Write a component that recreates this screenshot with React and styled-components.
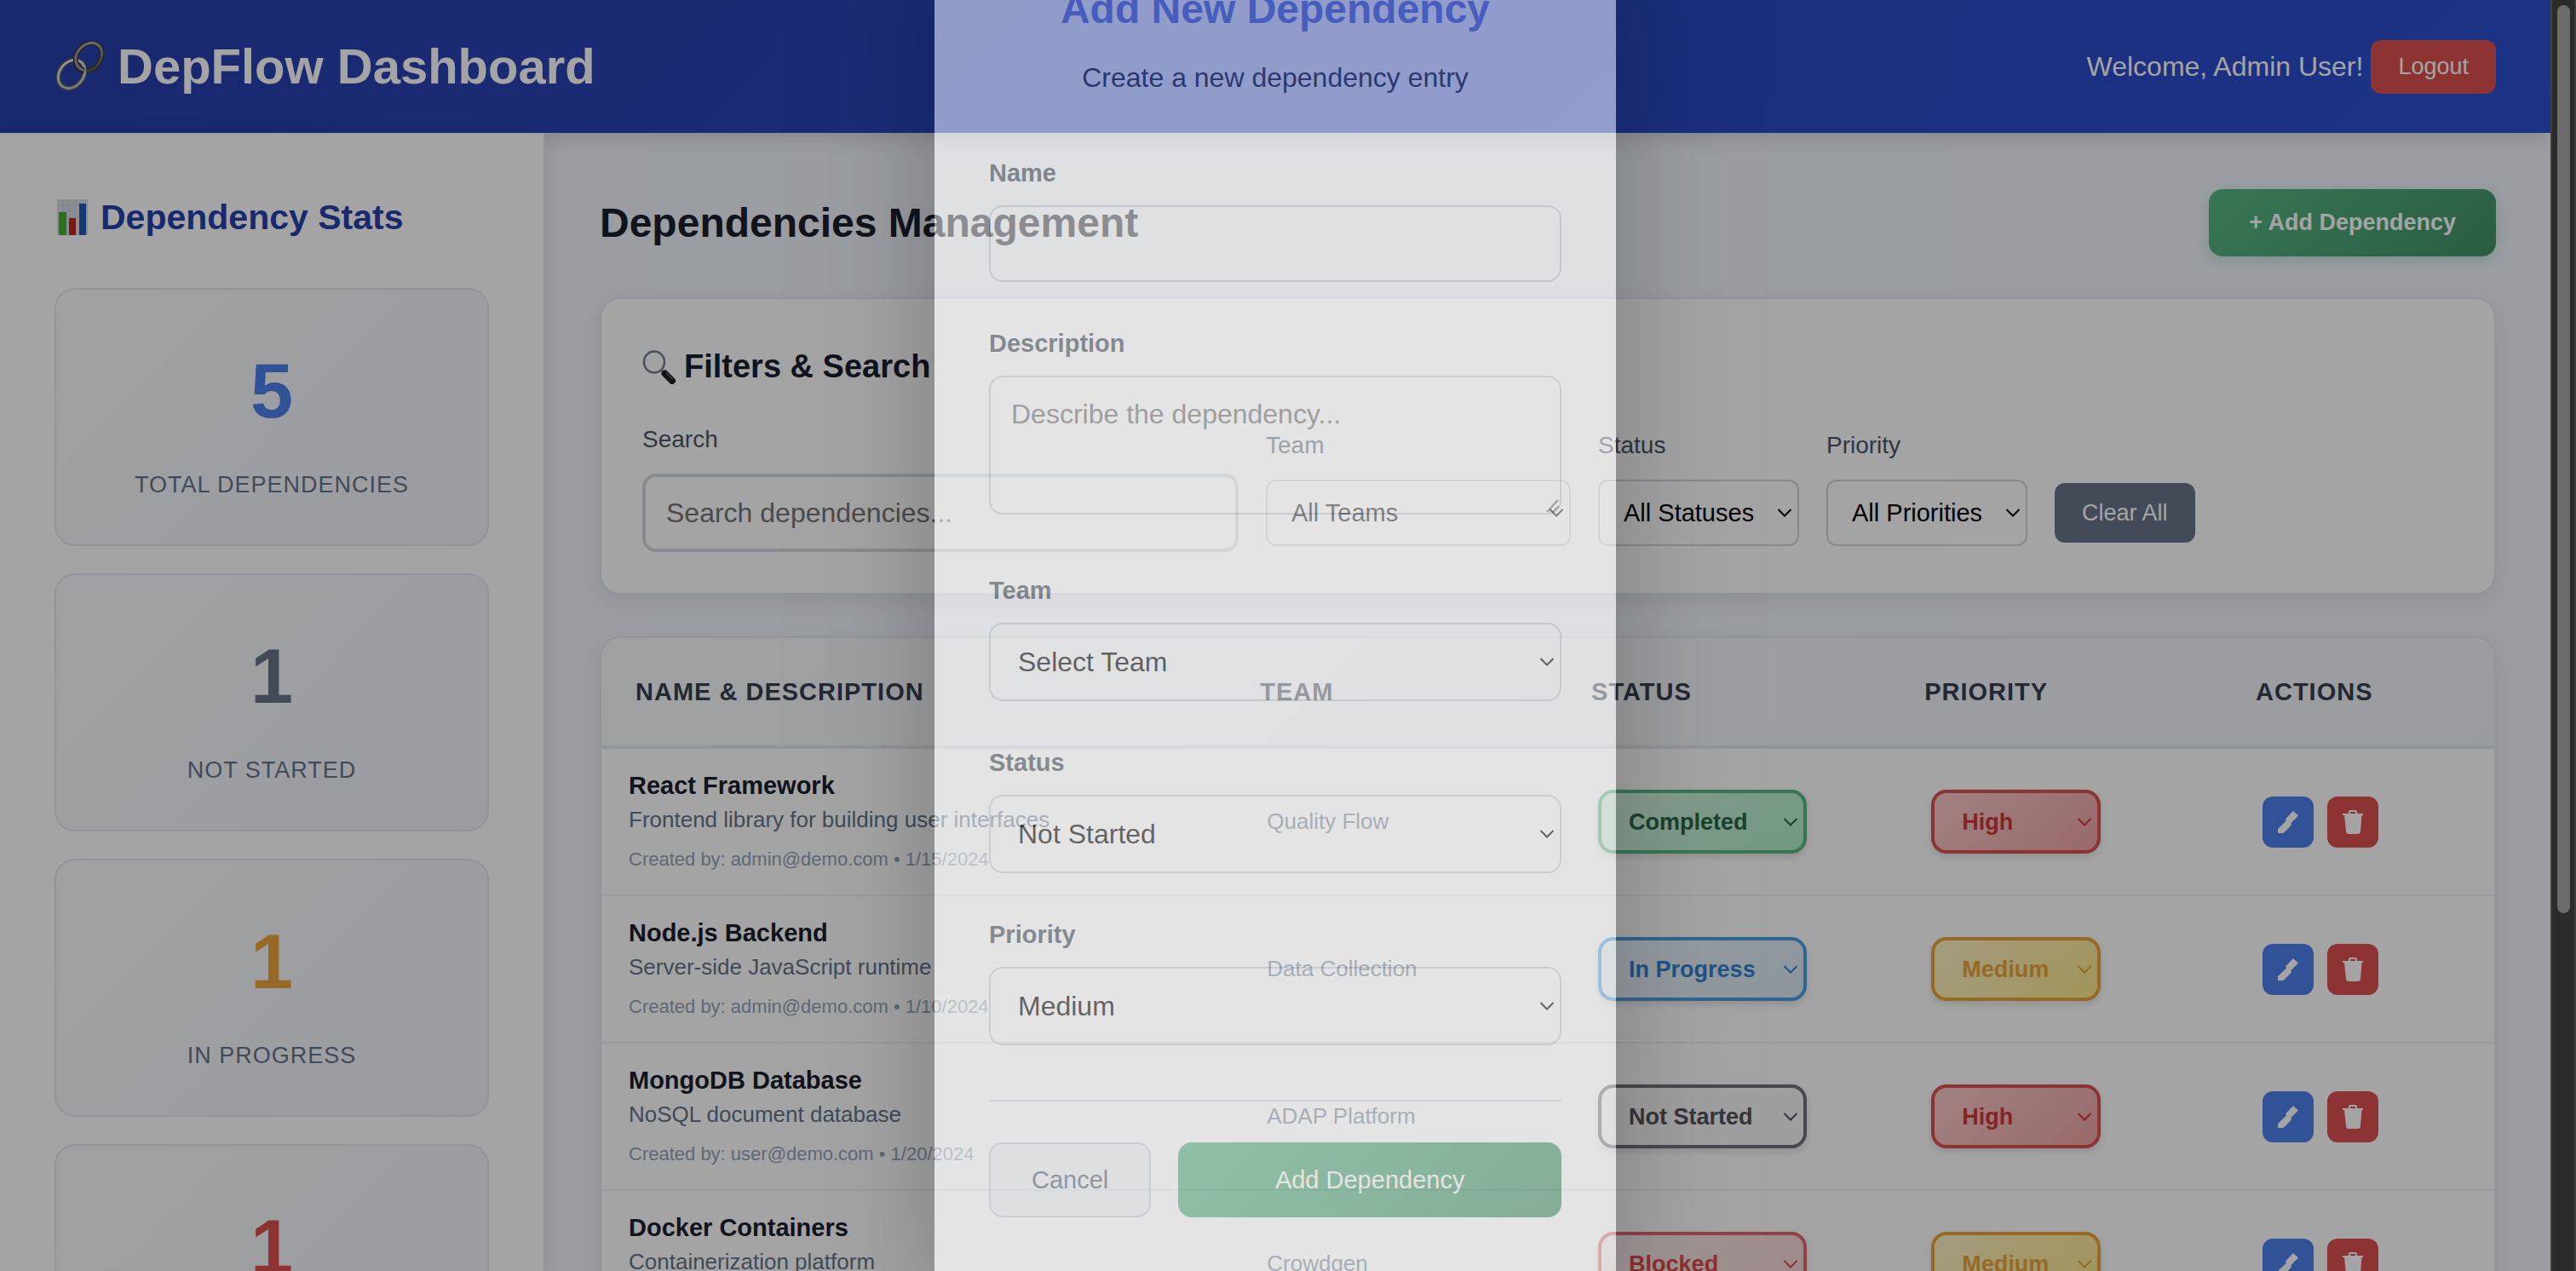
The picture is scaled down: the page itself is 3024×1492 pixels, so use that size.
import React from "react";
import styled, { createGlobalStyle } from "styled-components";

const GlobalStyle = createGlobalStyle`
  *, *::before, *::after { box-sizing: border-box; }
  body {
    margin: 0;
    background: #f1f4fb;
    color: #1a202c;
    font-family: "Liberation Sans", Arial, sans-serif;
    font-size: 32px;
  }
  button, input, select, textarea { font-family: inherit; margin: 0; }
  h1, h2, h3, p { margin: 0; }
`;

const Screen = styled.div`
  display: flex;
  height: 100vh;
  overflow: hidden;
`;

const Page = styled.div`
  position: relative;
  flex: 1;
  min-width: 0;
  display: flex;
  flex-direction: column;
  overflow: hidden;
`;

const ScrollTrack = styled.div`
  flex: none;
  width: 30px;
  padding: 6px 5px 6px 6px;
  background: #2b2b2b;
  border-left: 2px solid #3d3d3d;
  border-right: 2px solid #3d3d3d;
`;

const ScrollThumb = styled.div`
  height: 72%;
  border-radius: 8px;
  background: #6b6b6b;
`;

const Header = styled.header`
  flex: none;
  display: flex;
  align-items: center;
  justify-content: space-between;
  height: 156px;
  padding: 0 64px;
  background: linear-gradient(135deg, #2840ac 0%, #2c4fd0 100%);
  box-shadow: 0 4px 24px rgba(0, 0, 0, 0.15);
  color: #fff;
`;

const Brand = styled.h1`
  display: flex;
  align-items: center;
  gap: 14px;
  font-size: 58px;
  line-height: 68px;
`;

const Account = styled.div`
  display: flex;
  align-items: center;
  gap: 9px;
`;

const Welcome = styled.span`
  font-size: 32px;
  line-height: 36px;
`;

const Button = styled.button`
  border: 0;
  border-radius: 12px;
  padding: 0 32px;
  height: ${(p) => p.$height}px;
  background: ${(p) => p.$bg};
  color: #fff;
  font-size: 27px;
`;

const Columns = styled.div`
  flex: 1;
  min-height: 0;
  display: flex;
`;

const Sidebar = styled.aside`
  position: relative;
  flex: none;
  width: 640px;
  display: flex;
  flex-direction: column;
  gap: 32px;
  padding: 73px 64px 0;
  background: #fff;
  border-top: 2px solid #f1f4fb;
  border-right: 2px solid #e2e8f0;
  box-shadow: 4px 0 20px rgba(0, 0, 0, 0.08);
`;

const SidebarTitle = styled.h2`
  display: flex;
  align-items: center;
  gap: 12px;
  margin-bottom: 27px;
  color: #2840ac;
  font-size: 41px;
  line-height: 48px;
`;

const StatCard = styled.div`
  flex: none;
  display: flex;
  flex-direction: column;
  align-items: center;
  gap: 38px;
  height: 303px;
  padding-top: 67px;
  border: 2px solid #e2e8f0;
  border-radius: 24px;
  background: linear-gradient(135deg, #f8fafc 0%, #f1f3f8 100%);
`;

const StatValue = styled.span`
  color: ${(p) => p.$color};
  font-size: 90px;
  font-weight: 700;
  line-height: 104px;
`;

const StatLabel = styled.span`
  color: #64748b;
  font-size: 27px;
  line-height: 40px;
  letter-spacing: 1px;
  text-transform: uppercase;
`;

const Main = styled.main`
  flex: 1;
  min-width: 0;
  display: flex;
  flex-direction: column;
  padding: 66px 64px 0;
`;

const TitleBar = styled.div`
  display: flex;
  align-items: center;
  justify-content: space-between;
  margin-bottom: 48px;
`;

const PageTitle = styled.h2`
  font-size: 48px;
  line-height: 56px;
`;

const AddButton = styled.button`
  height: 79px;
  padding: 0 47px;
  border: 0;
  border-radius: 16px;
  background: linear-gradient(135deg, #56b985 0%, #429167 100%);
  box-shadow: 0 4px 16px rgba(72, 187, 120, 0.3);
  color: #fff;
  font-size: 27px;
  font-weight: 700;
`;

const Card = styled.section`
  flex: none;
  border: 2px solid #e2e8f0;
  border-radius: 24px;
  background: #fff;
  box-shadow: 0 8px 24px rgba(0, 0, 0, 0.08);
  overflow: hidden;
`;

const FilterCard = styled(Card)`
  padding: 57px 48px 48px;
  margin-bottom: 49px;
`;

const FilterTitle = styled.h3`
  display: flex;
  align-items: center;
  gap: 9px;
  margin-bottom: 48px;
  font-size: 38px;
  line-height: 44px;
`;

const FilterRow = styled.div`
  display: flex;
  align-items: center;
  gap: 32px;
`;

const FilterField = styled.div`
  flex: none;
  display: flex;
  flex-direction: column;
  gap: 24px;
  width: ${(p) => p.$width}px;
`;

const FilterLabel = styled.label`
  color: #4a5568;
  font-size: 28px;
  line-height: 32px;
`;

const SearchInput = styled.input`
  width: 100%;
  height: 92px;
  padding: 0 24px;
  border: 4px solid #d5d8de;
  border-radius: 16px;
  background: #fff;
  font-size: 32px;
  &::placeholder { color: #757575; opacity: 1; }
`;

const ButtonSlot = styled.div`
  align-self: flex-end;
  padding-bottom: 11px;
`;

const SelectWrap = styled.div`
  position: relative;
  color: ${(p) => p.$color || "#000"};
  width: ${(p) => (p.$width ? `${p.$width}px` : "100%")};
`;

const FilterSelectBox = styled.select`
  appearance: none;
  display: block;
  width: 100%;
  height: 78px;
  padding: 0 40px 0 28px;
  border: 2px solid #d3d5da;
  border-radius: 12px;
  background: #fff;
  color: inherit;
  font-size: 29px;
`;

const BadgeSelectBox = styled.select`
  appearance: none;
  display: block;
  width: 100%;
  height: 75px;
  padding: 0 32px;
  border: 4px solid ${(p) => p.$border};
  border-radius: 18px;
  background: ${(p) => p.$bg};
  box-shadow: 0 4px 8px rgba(0, 0, 0, 0.12);
  color: inherit;
  font-size: 27px;
  font-weight: 700;
`;

const ChevronIcon = styled.svg`
  position: absolute;
  top: 50%;
  right: ${(p) => p.$right}px;
  width: 18px;
  height: 12px;
  margin-top: -6px;
  fill: none;
  stroke: currentColor;
  stroke-width: 2;
  pointer-events: none;
`;

const Table = styled.table`
  width: 100%;
  table-layout: fixed;
  border-collapse: separate;
  border-spacing: 0;
`;

const Col = styled.col`
  width: ${(p) => p.$width};
`;

const HeadRow = styled.tr`
  background: linear-gradient(135deg, #f8fafc 0%, #f1f3f8 100%);
`;

const Th = styled.th`
  height: 130px;
  padding: 0 0 0 40px;
  border-bottom: 4px solid #e2e6f0;
  color: #374151;
  font-size: 29px;
  letter-spacing: 1px;
  text-align: left;
  text-transform: uppercase;
`;

const Td = styled.td`
  height: 173px;
  padding: 0 0 0 ${(p) => (p.$first ? 32 : 48)}px;
  border-bottom: 2px solid #edf0f5;
  color: #64748b;
  font-size: 26px;
  vertical-align: middle;
`;

const DepName = styled.p`
  color: #1a202c;
  font-size: 29px;
  font-weight: 700;
  line-height: 40px;
`;

const DepText = styled.p`
  color: #64748b;
  font-size: 26px;
  line-height: 40px;
  white-space: nowrap;
`;

const DepMeta = styled.p`
  margin-top: 8px;
  color: #94a3b8;
  font-size: 22px;
  line-height: 38px;
  white-space: nowrap;
`;

const Actions = styled.div`
  display: flex;
  gap: 16px;
`;

const IconButton = styled.button`
  display: flex;
  align-items: center;
  justify-content: center;
  width: 60px;
  height: 60px;
  padding: 0;
  border: 0;
  border-radius: 12px;
  background: ${(p) => p.$bg};
  color: #fff;
`;

const Overlay = styled.div`
  position: absolute;
  inset: 0;
  display: flex;
  align-items: flex-end;
  justify-content: center;
  background: rgba(0, 0, 0, 0.5);
  opacity: 0.71;
`;

const Modal = styled.form`
  flex: none;
  width: 800px;
  padding: 64px 64px 63px;
  background: #fff;
  box-shadow: 0 40px 120px rgba(0, 0, 0, 0.6);
  opacity: 0.71;
`;

const ModalHead = styled.div`
  display: flex;
  flex-direction: column;
  align-items: center;
  gap: 32px;
  margin-bottom: 76px;
`;

const ModalTitle = styled.h2`
  color: #6e84e6;
  font-size: 48px;
  line-height: 60px;
`;

const ModalText = styled.p`
  color: #363a4c;
  font-size: 32px;
  line-height: 36px;
`;

const Field = styled.div`
  display: flex;
  flex-direction: column;
  gap: 20px;
  margin-bottom: ${(p) => p.$space || 54}px;
`;

const FieldLabel = styled.label`
  color: #414b58;
  font-size: 29px;
  font-weight: 700;
  line-height: 36px;
`;

const TextInput = styled.input`
  width: 100%;
  height: 90px;
  padding: 0 24px;
  border: 2px solid #cbd0d8;
  border-radius: 16px;
  background: transparent;
  font-size: 32px;
`;

const TextAreaWrap = styled.div`
  position: relative;
`;

const TextArea = styled.textarea`
  display: block;
  width: 100%;
  height: 163px;
  padding: 24px;
  border: 2px solid #cbd0d8;
  border-radius: 16px;
  background: transparent;
  font-size: 32px;
  line-height: 38px;
  resize: none;
  &::placeholder { color: #757575; opacity: 1; }
`;

const Grip = styled.svg`
  position: absolute;
  right: 0;
  bottom: 0;
  width: 20px;
  height: 20px;
  fill: none;
  stroke: #777;
  stroke-width: 2;
`;

const FormSelect = styled.select`
  appearance: none;
  display: block;
  width: 100%;
  height: 92px;
  padding: 0 48px 0 32px;
  border: 2px solid #cbd0d8;
  border-radius: 16px;
  background: transparent;
  color: inherit;
  font-size: 32px;
`;

const ModalFoot = styled.div`
  display: flex;
  gap: 32px;
  padding-top: 48px;
  border-top: 2px solid #d8dce3;
`;

const CancelButton = styled.button`
  height: 88px;
  padding: 0 48px;
  border: 2px solid #cbd0d8;
  border-radius: 16px;
  background: #f1f4f9;
  color: #5a6478;
  font-size: 29px;
`;

const SubmitButton = styled.button`
  flex: 1;
  height: 88px;
  border: 0;
  border-radius: 16px;
  background: linear-gradient(135deg, #56b985 0%, #429167 100%);
  color: #fff;
  font-size: 29px;
`;

const Chevron = ({ right = 8 }) => (
  <ChevronIcon $right={right} viewBox="0 0 18 12" aria-hidden="true">
    <path d="M1.5 2 L9 9.5 L16.5 2" />
  </ChevronIcon>
);

const LinkIcon = () => (
  <svg width="60" height="60" viewBox="0 0 60 60" fill="none" aria-hidden="true">
    <defs>
      <linearGradient id="steelDark" x1="0" y1="0" x2="1" y2="1">
        <stop offset="0" stopColor="#b9bcc2" />
        <stop offset="1" stopColor="#4a4646" />
      </linearGradient>
      <linearGradient id="steelLight" x1="0" y1="0" x2="1" y2="1">
        <stop offset="0" stopColor="#eceff2" />
        <stop offset="1" stopColor="#b4b8be" />
      </linearGradient>
    </defs>
    <ellipse cx="40" cy="19" rx="14" ry="18" transform="rotate(38 40 19)" stroke="#3a3838" strokeWidth="6" />
    <ellipse cx="40" cy="19" rx="14" ry="18" transform="rotate(38 40 19)" stroke="url(#steelDark)" strokeWidth="3" />
    <ellipse cx="20" cy="39" rx="14" ry="18" transform="rotate(38 20 39)" stroke="#55565a" strokeWidth="6" />
    <ellipse cx="20" cy="39" rx="14" ry="18" transform="rotate(38 20 39)" stroke="url(#steelLight)" strokeWidth="3" />
    <path d="M25 19 C24 27 28 33 35 35" stroke="#3a3838" strokeWidth="6" />
    <path d="M25 18 C24 27 28 33 36 35" stroke="#9a9a9e" strokeWidth="3" />
  </svg>
);

const ChartIcon = () => (
  <svg width="42" height="44" viewBox="0 0 42 44" aria-hidden="true">
    <rect x="3" y="1" width="36" height="42" fill="#d5dde6" />
    <path d="M3 8H39M3 15H39M3 22H39M3 29H39M3 36H39M10 1V43M17 1V43M24 1V43M31 1V43" stroke="#c6d0dc" strokeWidth="1" />
    <rect x="5" y="16" width="9" height="27" fill="#43b02a" />
    <rect x="17" y="23" width="8" height="20" fill="#c0261d" />
    <rect x="29" y="6" width="8" height="37" fill="#2159b5" />
  </svg>
);

const SearchIcon = () => (
  <svg width="40" height="42" viewBox="0 0 40 42" fill="none" aria-hidden="true">
    <ellipse cx="14" cy="16" rx="12" ry="12.5" fill="#fbfcfd" stroke="#747c88" strokeWidth="2.5" />
    <path d="M22 25L27 30" stroke="#8a8a8a" strokeWidth="3" />
    <path d="M26.5 29.5L35 38" stroke="#1b1e20" strokeWidth="8" strokeLinecap="round" />
    <path d="M28 28.5L35.5 36" stroke="#5a6064" strokeWidth="1.5" />
  </svg>
);

const PencilIcon = () => (
  <svg width="24" height="26" viewBox="0 0 24 26" fill="currentColor" aria-hidden="true">
    <path d="M18 0 L24 5.5 L15.5 14 L16 16 L14.5 18 L6.5 26 L0 26 L0 21 L10 11.5 L9 9.5 Z" />
  </svg>
);

const TrashIcon = () => (
  <svg width="24" height="28" viewBox="0 0 24 28" fill="currentColor" aria-hidden="true">
    <path
      d="M7 4 V2 Q7 0 9 0 H15 Q17 0 17 2 V4 H24 V6 H22.5 L21 25 Q20.5 28 18 28 H7 Q4.5 28 4 25 L2 6 H0 V4 Z M9 4 H15 V2 H9 Z"
      fillRule="evenodd"
    />
  </svg>
);

const stats = [
  { value: 5, label: "Total Dependencies", color: "#4f80ed" },
  { value: 1, label: "Not Started", color: "#69738a" },
  { value: 1, label: "In Progress", color: "#eaa53b" },
  { value: 1, label: "Blocked", color: "#dc5050" },
];

const filters = [
  { id: "team", label: "Team", value: "All Teams", width: 358 },
  { id: "status", label: "Status", value: "All Statuses", width: 236 },
  { id: "priority", label: "Priority", value: "All Priorities", width: 236 },
];

const tones = {
  Completed: { color: "#276749", border: "#56b985", bg: "linear-gradient(135deg, #d6f5e2, #b0edca)" },
  "In Progress": { color: "#3182ce", border: "#4a9fe0", bg: "linear-gradient(135deg, #ebf4fb, #dce9f5)" },
  "Not Started": { color: "#52525b", border: "#71717a", bg: "#f7f7f8" },
  Blocked: { color: "#dc4a4a", border: "#e0696b", bg: "linear-gradient(135deg, #f7eeee, #f7d4d4)" },
  High: { color: "#cf3535", border: "#dc5050", bg: "linear-gradient(135deg, #f9caca, #eea5a5)" },
  Medium: { color: "#eaa53b", border: "#eaa53b", bg: "linear-gradient(135deg, #fef3c7, #fbe88b)" },
};

const rows = [
  { name: "React Framework", text: "Frontend library for building user interfaces", meta: "Created by: admin@demo.com • 1/15/2024", team: "Quality Flow", status: "Completed", priority: "High" },
  { name: "Node.js Backend", text: "Server-side JavaScript runtime", meta: "Created by: admin@demo.com • 1/10/2024", team: "Data Collection", status: "In Progress", priority: "Medium" },
  { name: "MongoDB Database", text: "NoSQL document database", meta: "Created by: user@demo.com • 1/20/2024", team: "ADAP Platform", status: "Not Started", priority: "High" },
  { name: "Docker Containers", text: "Containerization platform", meta: "Created by: admin@demo.com • 1/12/2024", team: "Crowdgen", status: "Blocked", priority: "Medium" },
];

const modalSelects = [
  { id: "new-team", label: "Team", value: "Select Team", space: 54 },
  { id: "new-status", label: "Status", value: "Not Started", space: 54 },
  { id: "new-priority", label: "Priority", value: "Medium", space: 64 },
];

const BadgeSelect = ({ value, width, label }) => {
  const tone = tones[value];
  return (
    <SelectWrap $color={tone.color} $width={width}>
      <BadgeSelectBox aria-label={label} $border={tone.border} $bg={tone.bg} defaultValue={value}>
        <option>{value}</option>
      </BadgeSelectBox>
      <Chevron right={10} />
    </SelectWrap>
  );
};

export default function App() {
  return (
    <Screen>
      <GlobalStyle />
      <Page>
        <Header>
          <Brand>
            <LinkIcon />
            DepFlow Dashboard
          </Brand>
          <Account>
            <Welcome>Welcome, Admin User!</Welcome>
            <Button $height={63} $bg="#dc5050">Logout</Button>
          </Account>
        </Header>
        <Columns>
          <Sidebar>
            <SidebarTitle>
              <ChartIcon />
              Dependency Stats
            </SidebarTitle>
            {stats.map((s) => (
              <StatCard key={s.label}>
                <StatValue $color={s.color}>{s.value}</StatValue>
                <StatLabel>{s.label}</StatLabel>
              </StatCard>
            ))}
          </Sidebar>
          <Main>
            <TitleBar>
              <PageTitle>Dependencies Management</PageTitle>
              <AddButton>+ Add Dependency</AddButton>
            </TitleBar>
            <FilterCard>
              <FilterTitle>
                <SearchIcon />
                Filters &amp; Search
              </FilterTitle>
              <FilterRow>
                <FilterField $width={700}>
                  <FilterLabel htmlFor="search">Search</FilterLabel>
                  <SearchInput id="search" placeholder="Search dependencies..." />
                </FilterField>
                {filters.map((f) => (
                  <FilterField key={f.id} $width={f.width}>
                    <FilterLabel htmlFor={f.id}>{f.label}</FilterLabel>
                    <SelectWrap>
                      <FilterSelectBox id={f.id} defaultValue={f.value}>
                        <option>{f.value}</option>
                      </FilterSelectBox>
                      <Chevron />
                    </SelectWrap>
                  </FilterField>
                ))}
                <ButtonSlot>
                  <Button $height={70} $bg="#69738a">Clear All</Button>
                </ButtonSlot>
              </FilterRow>
            </FilterCard>
            <Card>
              <Table>
                <colgroup>
                  <Col $width="33%" />
                  <Col $width="17.5%" />
                  <Col $width="17.6%" />
                  <Col $width="17.5%" />
                  <Col />
                </colgroup>
                <thead>
                  <HeadRow>
                    <Th>Name &amp; Description</Th>
                    <Th>Team</Th>
                    <Th>Status</Th>
                    <Th>Priority</Th>
                    <Th>Actions</Th>
                  </HeadRow>
                </thead>
                <tbody>
                  {rows.map((r) => (
                    <tr key={r.name}>
                      <Td $first>
                        <DepName>{r.name}</DepName>
                        <DepText>{r.text}</DepText>
                        <DepMeta>{r.meta}</DepMeta>
                      </Td>
                      <Td>{r.team}</Td>
                      <Td><BadgeSelect value={r.status} width={245} label={`Status of ${r.name}`} /></Td>
                      <Td><BadgeSelect value={r.priority} width={199} label={`Priority of ${r.name}`} /></Td>
                      <Td>
                        <Actions>
                          <IconButton $bg="#4f80ed" aria-label={`Edit ${r.name}`}><PencilIcon /></IconButton>
                          <IconButton $bg="#dc5050" aria-label={`Delete ${r.name}`}><TrashIcon /></IconButton>
                        </Actions>
                      </Td>
                    </tr>
                  ))}
                </tbody>
              </Table>
            </Card>
          </Main>
        </Columns>
        <Overlay>
          <Modal>
            <ModalHead>
              <ModalTitle>Add New Dependency</ModalTitle>
              <ModalText>Create a new dependency entry</ModalText>
            </ModalHead>
            <Field>
              <FieldLabel htmlFor="new-name">Name</FieldLabel>
              <TextInput id="new-name" />
            </Field>
            <Field $space={71}>
              <FieldLabel htmlFor="new-description">Description</FieldLabel>
              <TextAreaWrap>
                <TextArea id="new-description" placeholder="Describe the dependency..." />
                <Grip viewBox="0 0 20 20" aria-hidden="true">
                  <path d="M3 17 L16 3 M10 17 L17 10" />
                </Grip>
              </TextAreaWrap>
            </Field>
            {modalSelects.map((s) => (
              <Field key={s.id} $space={s.space}>
                <FieldLabel htmlFor={s.id}>{s.label}</FieldLabel>
                <SelectWrap>
                  <FormSelect id={s.id} defaultValue={s.value}>
                    <option>{s.value}</option>
                  </FormSelect>
                  <Chevron />
                </SelectWrap>
              </Field>
            ))}
            <ModalFoot>
              <CancelButton type="button">Cancel</CancelButton>
              <SubmitButton type="button">Add Dependency</SubmitButton>
            </ModalFoot>
          </Modal>
        </Overlay>
      </Page>
      <ScrollTrack>
        <ScrollThumb />
      </ScrollTrack>
    </Screen>
  );
}
